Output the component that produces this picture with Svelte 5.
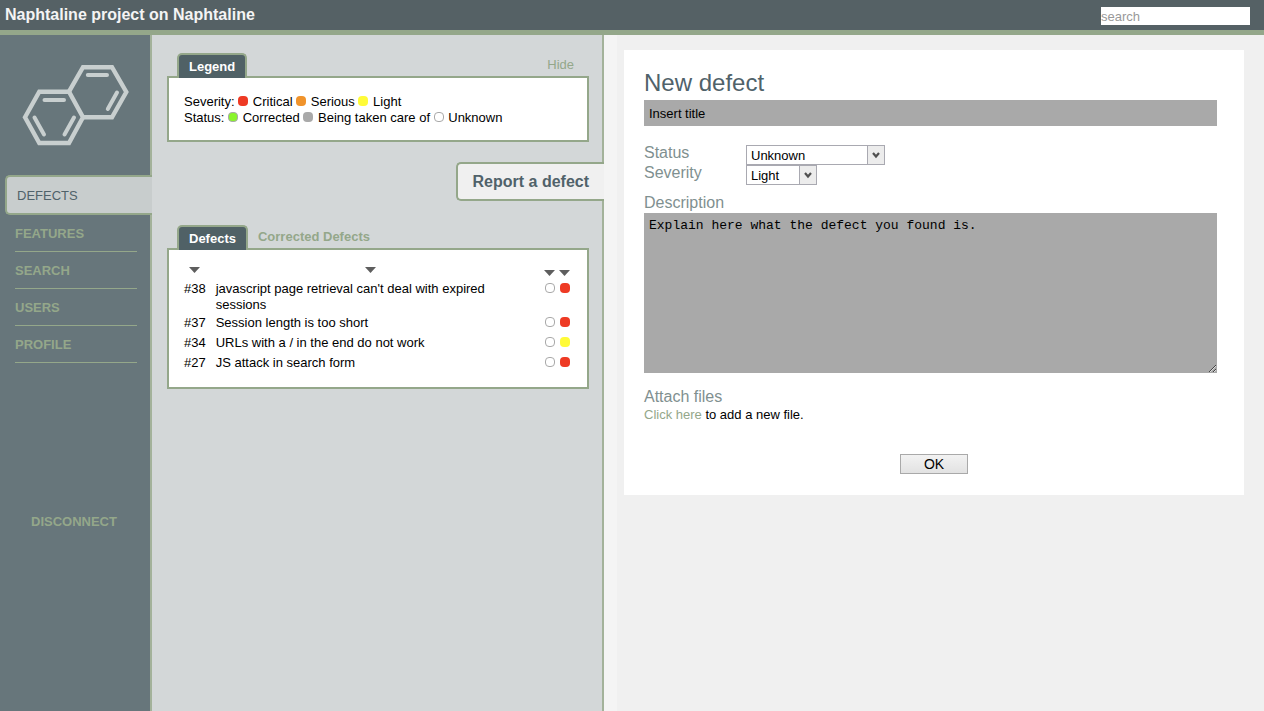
<script>
  const nav = ['Features', 'Search', 'Users', 'Profile'];
  const severities = [
    { name: 'Critical', tone: 'critical' },
    { name: 'Serious', tone: 'serious' },
    { name: 'Light', tone: 'light' }
  ];
  const statuses = [
    { name: 'Corrected', tone: 'corrected' },
    { name: 'Being taken care of', tone: 'progress' },
    { name: 'Unknown', tone: 'unknown' }
  ];
  const defects = [
    { id: 38, title: "javascript page retrieval can't deal with expired sessions", tone: 'critical' },
    { id: 37, title: 'Session length is too short', tone: 'critical' },
    { id: 34, title: 'URLs with a / in the end do not work', tone: 'light' },
    { id: 27, title: 'JS attack in search form', tone: 'critical' }
  ];
  let title = $state('Insert title');
  let description = $state('Explain here what the defect you found is.');
  let status = $state('Unknown');
  let severity = $state('Light');
</script>

{#snippet arrow()}
  <svg width="11" height="6" viewBox="0 0 11 6" aria-hidden="true"><path d="M0 0H11L5.5 6Z" fill="#5e5e5e" /></svg>
{/snippet}

{#snippet chevron()}
  <span class="drop" aria-hidden="true">
    <svg width="8" height="7" viewBox="0 0 8 7"><path d="M1 1L4 4.5L7 1" fill="none" stroke="#505050" stroke-width="2.2" /></svg>
  </span>
{/snippet}

<div class="page">
  <header>
    <h1>Naphtaline project on Naphtaline</h1>
    <input class="search" type="search" placeholder="search" aria-label="search" />
  </header>

  <div class="columns">
    <aside>
      <svg class="logo" width="110" height="84" viewBox="0 0 110 84" fill="none" stroke="#c8cfcf" stroke-width="4.4" stroke-linecap="round" aria-hidden="true">
        <path d="M5 54.3L19.3 28.7H49L63 54.3L49 80H19.3Z" />
        <path d="M49 28.7L63 4.2H92L106.3 29L92 54.3H63" />
        <path d="M24.500 37H44M14.500 54.500L24 71.500M54 54.500L44.500 71.500M67.800 12H87M97 29.500L87.800 46" stroke-width="4" />
      </svg>
      <nav>
        <a class="active" href="#defects">DEFECTS</a>
        {#each nav as item}
          <a href="#{item}">{item.toUpperCase()}</a>
        {/each}
      </nav>
      <a class="disconnect" href="#disconnect">DISCONNECT</a>
    </aside>

    <section class="list">
      <div class="tabs">
        <h2 class="tab">Legend</h2>
        <a class="hide" href="#hide">Hide</a>
      </div>
      <div class="box legend">
        <div>Severity: {#each severities as s}<i class="dot {s.tone}"></i> {s.name + ' '}{/each}</div>
        <div>Status: {#each statuses as s}<i class="dot {s.tone}"></i> {s.name + ' '}{/each}</div>
      </div>

      <a class="report" href="#report">Report a defect</a>

      <div class="tabs">
        <h2 class="tab">Defects</h2>
        <a class="other" href="#corrected">Corrected Defects</a>
      </div>
      <div class="box">
        <table>
          <thead>
            <tr>
              <th class="id" aria-label="Number">{@render arrow()}</th>
              <th class="name" aria-label="Title">{@render arrow()}</th>
              <th class="mark" aria-label="Status">{@render arrow()}</th>
              <th class="mark" aria-label="Severity">{@render arrow()}</th>
            </tr>
          </thead>
          <tbody>
            {#each defects as d}
              <tr>
                <td>#{d.id}</td>
                <td class="title">{d.title}</td>
                <td class="mark"><i class="dot unknown"></i></td>
                <td class="mark"><i class="dot {d.tone}"></i></td>
              </tr>
            {/each}
          </tbody>
        </table>
      </div>
    </section>

    <main>
      <form onsubmit={(e) => e.preventDefault()}>
        <h2>New defect</h2>
        <input class="field" type="text" bind:value={title} aria-label="Title" />
        <div class="choices">
          <label for="status">Status</label>
          <span class="select wide">
            <select id="status" bind:value={status}>
              {#each statuses as s}<option>{s.name}</option>{/each}
            </select>
            {@render chevron()}
          </span>
          <label for="severity">Severity</label>
          <span class="select">
            <select id="severity" bind:value={severity}>
              {#each severities as s}<option>{s.name}</option>{/each}
            </select>
            {@render chevron()}
          </span>
        </div>
        <label for="description">Description</label>
        <textarea id="description" class="field" bind:value={description}></textarea>
        <h3>Attach files</h3>
        <p><a href="#attach">Click here</a> to add a new file.</p>
        <button type="submit">OK</button>
      </form>
    </main>
  </div>
</div>

<style>
  :global(body) { margin: 0; }
  .page {
    display: flex;
    flex-direction: column;
    min-height: 100vh;
    font: 13px/16px "Liberation Sans", Arial, sans-serif;
    color: #000;
    background: #f0f0f0;
  }
  .page * { box-sizing: border-box; }
  a { color: #94a78a; text-decoration: none; }
  h1, h2, h3, p { margin: 0; }
  header {
    display: flex;
    justify-content: space-between;
    align-items: center;
    height: 35px;
    padding: 0 14px 0 5px;
    background: #556165;
    border-bottom: 5px solid #94a78a;
  }
  h1 { font-size: 16px; line-height: 30px; color: #f4f4f4; }
  .search {
    appearance: none;
    width: 149px;
    height: 18px;
    margin-top: 2px;
    padding: 0;
    border: 0;
    border-radius: 0;
    background: #fff;
    font: inherit;
  }
  .search::placeholder { color: #999; }
  .columns { display: grid; grid-template-columns: 152px 452px 1fr; flex: 1; }

  aside {
    background: #67767b;
    border-right: 2px solid #a3b29a;
    display: flex;
    flex-direction: column;
  }
  .logo { display: block; margin: 28px 0 28px 20px; }
  nav { display: flex; flex-direction: column; }
  nav a {
    height: 37px;
    margin: 0 13px 0 15px;
    line-height: 38px;
    font-weight: bold;
    border-bottom: 1px solid #94a78a;
  }
  nav .active {
    height: 40px;
    margin: 0 -2px 0 5px;
    padding-left: 10px;
    border: 2px solid #94a78a;
    border-right: 0;
    border-radius: 5px 0 0 5px;
    background: #c8cdcd;
    color: #50626a;
    font-weight: normal;
  }
  .disconnect { margin-top: 151px; padding-left: 31px; font-weight: bold; }

  .list {
    padding: 18px 13px 15px 15px;
    background: #d3d7d8;
    border-right: 2px solid #a3b29a;
  }
  .tabs { display: flex; padding: 0 15px 0 10px; margin-bottom: -2px; }
  .tab {
    position: relative;
    height: 25px;
    padding: 0 10px;
    border: 2px solid #94a78a;
    border-bottom: 0;
    border-radius: 5px 5px 0 0;
    background: #506166;
    color: #fff;
    font-size: 13px;
    line-height: 23px;
  }
  .hide { margin-left: auto; line-height: 23px; }
  .other { margin-left: 10px; line-height: 23px; font-weight: bold; }
  .box { padding: 15px 15px 13px; border: 2px solid #94a78a; background: #fff; }
  .legend { padding: 16px 15px 14px; }
  .dot {
    display: inline-block;
    width: 10px;
    height: 10px;
    border-radius: 4px;
    vertical-align: 0;
  }
  .legend .dot { margin-right: 1px; }
  .critical { background: #ee3a24; }
  .serious { background: #f0932b; }
  .light { background: #fffb38; }
  .corrected { background: #8af52b; border: 1px solid #a9a9a9; }
  .progress { background: #a9a9a9; }
  .unknown { background: #fff; border: 1px solid #a9a9a9; }
  .report {
    display: block;
    width: max-content;
    height: 39px;
    margin: 20px -15px 24px auto;
    padding: 0 15px;
    border: 2px solid #94a78a;
    border-right: 0;
    border-radius: 5px 0 0 5px;
    background: #f0f0f0;
    color: #50626a;
    font-size: 16px;
    font-weight: bold;
    line-height: 35px;
  }
  table { width: 100%; border-collapse: collapse; }
  th { height: 15px; padding: 2px 0 0; line-height: 0; vertical-align: top; font-weight: normal; }
  th.id { width: 21px; }
  th.name { padding-right: 6px; }
  th.mark { padding-top: 5px; }
  td { height: 20px; padding: 1px 0; vertical-align: top; }
  td.title { padding: 1px 40px 1px 10px; }
  .mark { width: 15px; text-align: center; }

  main { padding: 15px 20px; background: linear-gradient(90deg, #f4f4f4 13px, #f0f0f0 13px); }
  form {
    display: flex;
    flex-direction: column;
    padding: 18px 27px 21px 20px;
    background: #fff;
  }
  form h2 { padding-bottom: 2px; font-size: 24px; line-height: 30px; font-weight: normal; color: #50626a; }
  label, h3 { font-size: 16px; line-height: 20px; font-weight: normal; color: #7f9090; }
  .field {
    width: 100%;
    border: 0;
    border-radius: 0;
    padding: 5px;
    background: #a9a9a9;
    color: #000;
    outline: 0;
  }
  input.field { height: 26px; font: inherit; }
  textarea.field { display: block; height: 160px; font: 13px/16px "Liberation Mono", "Courier New", monospace; resize: both; }
  .choices {
    display: grid;
    grid-template-columns: 102px 1fr;
    grid-auto-rows: 20px;
    margin: 17px 0 10px;
  }
  .select { display: grid; width: 71px; height: 20px; margin-top: 2px; }
  .wide { width: 139px; }
  select {
    grid-area: 1 / 1;
    appearance: none;
    padding: 1px 4px 0;
    border: 1px solid #a9a9b1;
    border-radius: 0;
    background: #fff;
    color: #000;
    font: inherit;
  }
  .drop {
    grid-area: 1 / 1;
    justify-self: end;
    display: grid;
    place-items: center;
    width: 18px;
    border: 1px solid #a9a9b1;
    background: #ececec;
    pointer-events: none;
  }
  h3 { margin-top: 14px; }
  button {
    align-self: center;
    width: 68px;
    height: 20px;
    margin: 31px 0 0 7px;
    padding: 0;
    border: 1px solid #a9a9a9;
    border-radius: 0;
    background: linear-gradient(#f2f2f2, #e2e2e2);
    color: #000;
    font: 14px/16px "Liberation Sans", Arial, sans-serif;
  }
</style>
